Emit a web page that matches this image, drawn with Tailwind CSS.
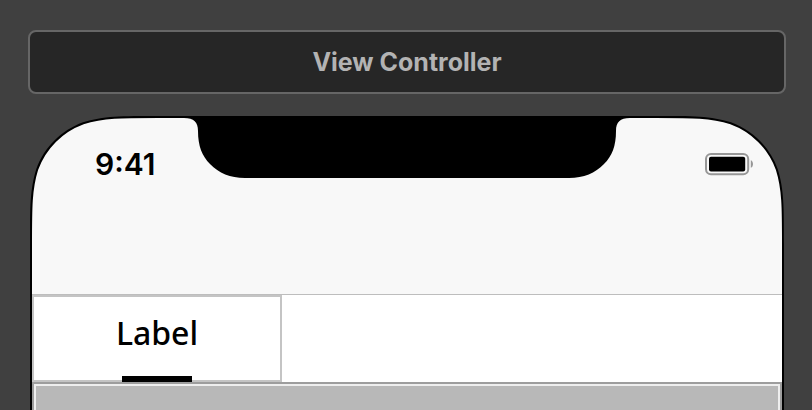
<!DOCTYPE html>
<html lang="en">
<head>
  <meta charset="UTF-8" />
  <meta name="viewport" content="width=device-width, initial-scale=1" />
  <title>View Controller</title>
  <script src="https://cdn.jsdelivr.net/npm/@tailwindcss/browser@4"></script>
</head>
<body class="bg-[#404040] h-screen overflow-hidden flex flex-col pl-7 pr-[26px] pt-[30px] font-['Inter',sans-serif]">

  <header class="h-16 shrink-0 flex items-center justify-center rounded-lg border-2 border-[#666666] bg-[#262626]">
    <h1 class="text-[25px] leading-8 font-bold text-[#b3b3b3]">View Controller</h1>
  </header>

  <!-- device -->
  <main class="relative mt-[22px] mx-0.5 flex-1 flex flex-col border-2 border-b-0 border-black bg-white">

    <!-- rounded screen corners -->
    <svg class="absolute -top-0.5 -left-0.5" width="130" height="130" viewBox="0 0 130 130" aria-hidden="true">
      <path d="M130 0H128.4C91.4 0 73 0 53 6.3C31.3 14.2 14.2 31.3 6.3 53C0 73 0 91.4 0 128.4V130" fill="none" stroke="#000" stroke-width="4"/>
      <path d="M-1 -1H130V0H128.4C91.4 0 73 0 53 6.3C31.3 14.2 14.2 31.3 6.3 53C0 73 0 91.4 0 128.4V130H-1Z" fill="#404040"/>
    </svg>
    <svg class="absolute -top-0.5 -right-0.5 -scale-x-100" width="130" height="130" viewBox="0 0 130 130" aria-hidden="true">
      <path d="M130 0H128.4C91.4 0 73 0 53 6.3C31.3 14.2 14.2 31.3 6.3 53C0 73 0 91.4 0 128.4V130" fill="none" stroke="#000" stroke-width="4"/>
      <path d="M-1 -1H130V0H128.4C91.4 0 73 0 53 6.3C31.3 14.2 14.2 31.3 6.3 53C0 73 0 91.4 0 128.4V130H-1Z" fill="#404040"/>
    </svg>

    <!-- notch -->
    <svg class="absolute top-0 left-1/2 -translate-x-1/2" width="446" height="60" viewBox="0 0 446 60" aria-hidden="true">
      <path d="M0 0C10 0 14 4 14 13C14 28 18 38 26 46C35 55 46 60 61 60H385C400 60 411 55 420 46C428 38 432 28 432 13C432 4 436 0 446 0Z" fill="#000"/>
    </svg>

    <!-- status bar -->
    <div class="h-[177px] shrink-0 flex items-start justify-between pt-7 pl-[63px] pr-7 bg-[#f8f8f8] border-b border-[#bdbdbd]">
      <time class="text-3xl leading-9 font-semibold text-black">9:41</time>
      <svg class="mt-1.5" width="50" height="24" viewBox="0 0 50 24" role="img" aria-label="Battery full">
        <rect x="2" y="1.9" width="42.2" height="20.4" rx="5" fill="none" stroke="#979797" stroke-width="2"/>
        <rect x="5" y="4.8" width="36.2" height="14.7" rx="2" fill="#000"/>
        <path d="M46.8 8.2C49.7 9 49.7 15 46.8 15.8Z" fill="#979797"/>
      </svg>
    </div>

    <nav class="h-[87px] shrink-0 flex">
      <button type="button" class="relative w-1/3 border-2 border-[#c4c4c4] pb-3 text-[32px] leading-none font-medium text-black font-['Noto_Sans',sans-serif]">
        Label
        <span class="absolute -bottom-0.5 left-[88px] w-[70px] h-1.5 bg-black"></span>
      </button>
    </nav>

    <section class="flex-1 border-2 border-b-0 border-[#9d9d9d] bg-[#b8b8b8]">
      <div class="h-full border-2 border-b-0 border-[#eeeeee]"></div>
    </section>
  </main>

</body>
</html>
